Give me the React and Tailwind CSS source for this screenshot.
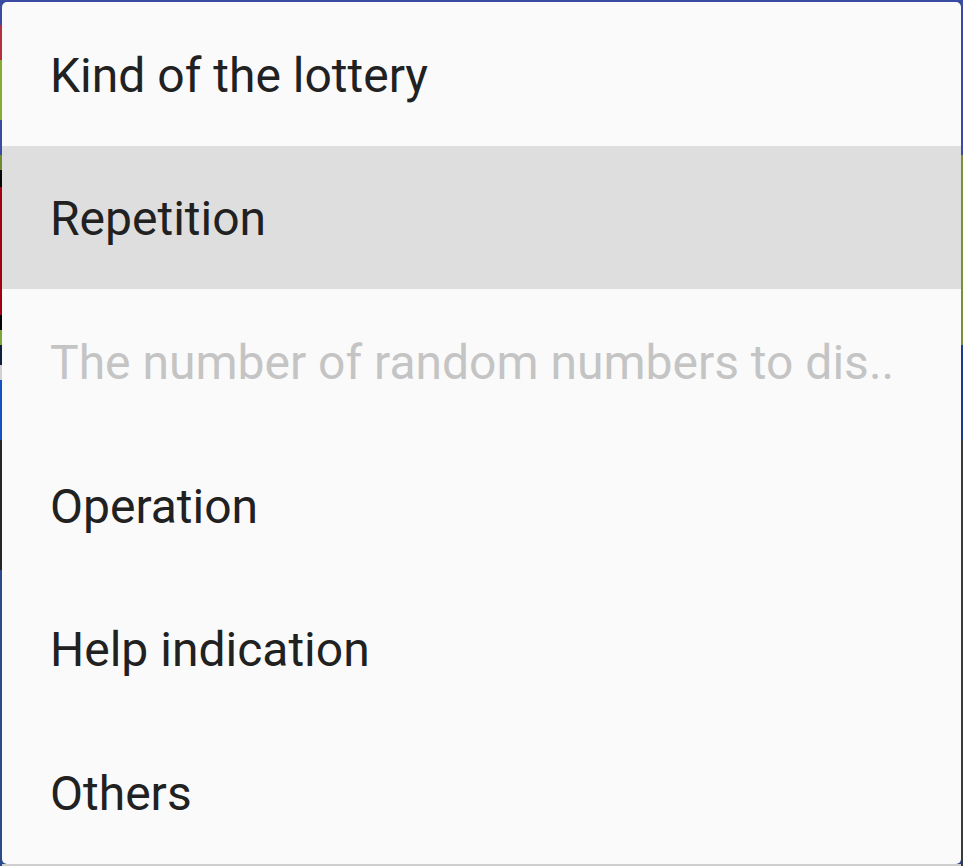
import React from 'react';

const leftStrip = [
  ['h-[25px]', 'bg-[#3b4aa2]'],
  ['h-[35px]', 'bg-[#b3303f]'],
  ['h-[60px]', 'bg-[#86ad33]'],
  ['h-[35px]', 'bg-[#3b4aa2]'],
  ['h-[15px]', 'bg-[#6f8a2c]'],
  ['h-[17px]', 'bg-[#050505]'],
  ['h-[128px]', 'bg-[#a0000f]'],
  ['h-[15px]', 'bg-[#050505]'],
  ['h-[15px]', 'bg-[#7ea537]'],
  ['h-[20px]', 'bg-[#0f1f3f]'],
  ['h-[15px]', 'bg-[#d0d0d0]'],
  ['h-[60px]', 'bg-[#1452c2]'],
  ['h-[130px]', 'bg-[#262626]'],
  ['flex-1', 'bg-[#2b4a8a]'],
];

const rightStrip = [
  ['h-[155px]', 'bg-[#3b4aa2]'],
  ['h-[190px]', 'bg-[#7a8f3a]'],
  ['h-[95px]', 'bg-[#1a3a8a]'],
  ['flex-1', 'bg-[#3a3a3a]'],
];

const items = [
  { label: 'Kind of the lottery' },
  { label: 'Repetition', active: true },
  { label: 'The number of random numbers to dis..', disabled: true },
  { label: 'Operation' },
  { label: 'Help indication' },
  { label: 'Others' },
];

const Strip = ({ parts }) => (
  <div className="flex flex-col w-[2px] shrink-0">
    {parts.map(([h, c], i) => (
      <div key={i} className={`${h} ${c}`} />
    ))}
  </div>
);

export default function App() {
  return (
    <div className="w-[963px] h-[866px] flex overflow-hidden bg-[#2b4a8a]" style={{ fontFamily: 'Roboto, "Noto Sans", sans-serif' }}>
      <Strip parts={leftStrip} />
      <div className="flex flex-col flex-1 min-w-0">
        <div className="h-[2px] shrink-0 bg-[#3b4aa2]" />
        <div className="flex-1 bg-[#fafafa] rounded-[5px] overflow-hidden flex flex-col">
          {items.map((item) => (
            <div
              key={item.label}
              className={`h-[143.67px] shrink-0 flex items-center pl-[48px] pt-[4px] text-[48px] leading-none ${
                item.active ? 'bg-[#dedede]' : ''
              } ${item.disabled ? 'text-[#c4c4c4]' : 'text-[#212121]'}`}
            >
              <span className="whitespace-nowrap">{item.label}</span>
            </div>
          ))}
        </div>
        <div className="h-[2px] shrink-0 bg-[#cfcfcf]" />
      </div>
      <Strip parts={rightStrip} />
    </div>
  );
}
